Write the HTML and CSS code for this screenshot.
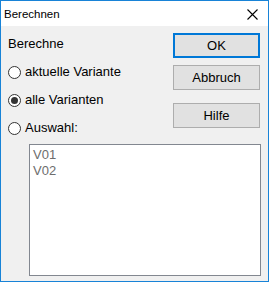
FILE: index.html
```html
<!DOCTYPE html>
<html lang="de">
<head>
  <meta charset="UTF-8" />
  <title>Berechnen</title>
  <link rel="stylesheet" href="styles.css">
</head>
<body>

  <div class="window">
    <div class="titlebar">
      <span class="title">Berechnen</span>
      <span class="close">
        <svg width="11" height="11" viewBox="0 0 11 11">
          <path d="M0.5 0.5 L10.5 10.5 M10.5 0.5 L0.5 10.5" stroke="#000" stroke-width="1.1" fill="none"/>
        </svg>
      </span>
    </div>

    <div class="content">
      <div class="top">
        <div class="options">
          <div class="label">Berechne</div>
          <label class="radio"><span class="circle"></span>aktuelle Variante</label>
          <label class="radio"><span class="circle checked"></span>alle Varianten</label>
          <label class="radio"><span class="circle"></span>Auswahl:</label>
        </div>
        <div class="buttons">
          <button class="btn default">OK</button>
          <button class="btn">Abbruch</button>
          <button class="btn help">Hilfe</button>
        </div>
      </div>

      <div class="listbox">
        <div class="item">V01</div>
        <div class="item">V02</div>
      </div>
    </div>
  </div>

</body>
</html>
```

FILE: styles.css
```css
* {
  box-sizing: border-box;
  margin: 0;
  padding: 0;
}

body {
  font-family: 'Liberation Sans', Arial, sans-serif;
  font-size: 13px;
  color: #000;
  background: #fff;
}

.window {
  width: 269px;
  height: 282px;
  border: 1px solid #1883d7;
  background: #f0f0f0;
  display: flex;
  flex-direction: column;
}

.titlebar {
  height: 25px;
  background: #fff;
  display: flex;
  align-items: center;
  justify-content: space-between;
  padding: 0 10px 0 3px;
}

.title {
  font-size: 11.5px;
}

.close {
  display: flex;
  margin-top: 1px;
}

.content {
  padding: 7px 8px 0 7px;
}

.top {
  display: flex;
  justify-content: space-between;
}

.options {
  display: flex;
  flex-direction: column;
  padding-top: 3px;
}

.label {
  line-height: 16px;
  margin-bottom: 12px;
}

.radio {
  display: flex;
  align-items: center;
  line-height: 16px;
  margin-bottom: 12px;
}

.radio:last-child {
  margin-bottom: 0;
}

.circle {
  width: 13px;
  height: 13px;
  border: 1px solid #333;
  border-radius: 50%;
  background: #fff;
  margin-right: 4px;
  display: flex;
  align-items: center;
  justify-content: center;
}

.circle.checked::after {
  content: "";
  width: 7px;
  height: 7px;
  border-radius: 50%;
  background: #333;
}

.buttons {
  display: flex;
  flex-direction: column;
  gap: 7px;
  width: 87px;
}

.btn {
  font-family: 'Liberation Sans', Arial, sans-serif;
  font-size: 13px;
  height: 25px;
  border: 1px solid #adadad;
  background: #e1e1e1;
  color: #000;
}

.btn.default {
  border: 2px solid #0078d7;
}

.btn.help {
  margin-top: 6px;
}

.listbox {
  margin: 8px 0 0 21px;
  width: 232px;
  height: 132px;
  border: 1px solid #828790;
  background: #fff;
  padding: 2px 3px;
  color: #6d6d6d;
}

.item {
  line-height: 16px;
}
```
